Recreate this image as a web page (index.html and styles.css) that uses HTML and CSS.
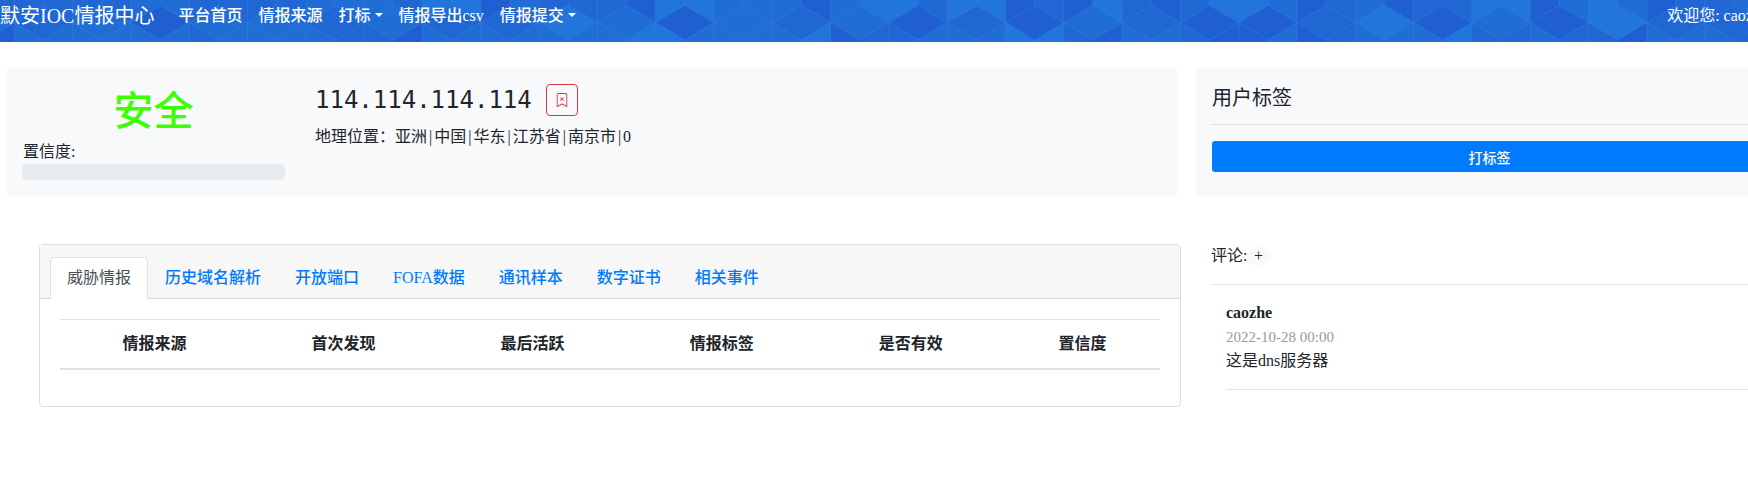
FILE: index.html
```
<!DOCTYPE html>
<html lang="zh-CN">
<head>
<meta charset="utf-8">
<title>默安IOC情报中心</title>
<link rel="stylesheet" href="styles.css">
</head>
<body>
<div class="page">
  <header class="navbar">
    <svg class="navbar-pattern" aria-hidden="true"></svg>
    <a class="brand" href="#">默安IOC情报中心</a>
    <nav class="nav">
      <a href="#">平台首页</a>
      <a href="#">情报来源</a>
      <a class="dropdown" href="#">打标</a>
      <a href="#">情报导出csv</a>
      <a class="dropdown" href="#">情报提交</a>
    </nav>
    <span class="welcome">欢迎您: caozhe</span>
  </header>

  <main class="layout">
    <section class="panel summary">
      <div class="verdict">
        <h1 class="verdict-name">安全</h1>
        <div class="confidence" id="confidence">置信度:</div>
        <div class="progress" role="progressbar" aria-labelledby="confidence"></div>
      </div>
      <div class="address">
        <div class="address-line">
          <h2 class="ip">114.114.114.114</h2>
          <button class="mark" type="button" aria-label="标记">
            <svg width="14" height="14" viewBox="0 0 16 16" fill="currentColor"><path fill-rule="evenodd" d="M6.146 5.146a.5.5 0 0 1 .708 0L8 6.293l1.146-1.147a.5.5 0 1 1 .708.708L8.707 7l1.147 1.146a.5.5 0 0 1-.708.708L8 7.707 6.854 8.854a.5.5 0 1 1-.708-.708L7.293 7 6.146 5.854a.5.5 0 0 1 0-.708z"/><path d="M2 2a2 2 0 0 1 2-2h8a2 2 0 0 1 2 2v13.500a.5.5 0 0 1-.777.416L8 13.101l-5.223 2.815A.5.5 0 0 1 2 15.500V2zm2-1a1 1 0 0 0-1 1v12.566l4.723-2.482a.5.5 0 0 1 .554 0L13 14.566V2a1 1 0 0 0-1-1H4z"/></svg>
          </button>
        </div>
        <p class="location">地理位置：亚洲<span class="sep">|</span>中国<span class="sep">|</span>华东<span class="sep">|</span>江苏省<span class="sep">|</span>南京市<span class="sep">|</span>0</p>
      </div>
    </section>

    <section class="panel tags">
      <h2 class="tags-title">用户标签</h2>
      <button class="add-tag" type="button">打标签</button>
    </section>

    <section class="card">
      <nav class="tabs">
        <a class="tab active" href="#">威胁情报</a>
        <a class="tab" href="#">历史域名解析</a>
        <a class="tab" href="#">开放端口</a>
        <a class="tab" href="#">FOFA数据</a>
        <a class="tab" href="#">通讯样本</a>
        <a class="tab" href="#">数字证书</a>
        <a class="tab" href="#">相关事件</a>
      </nav>
      <div class="card-body">
        <table class="intel">
          <thead>
            <tr><th>情报来源</th><th>首次发现</th><th>最后活跃</th><th>情报标签</th><th>是否有效</th><th>置信度</th></tr>
          </thead>
        </table>
      </div>
    </section>

    <section class="comments">
      <div class="comments-head">评论:<button class="add-comment" type="button">+</button></div>
      <article class="comment">
        <strong>caozhe</strong>
        <time datetime="2022-10-28">2022-10-28 00:00</time>
        <p>这是dns服务器</p>
      </article>
    </section>
  </main>
</div>
<script src="pattern.js"></script>
</body>
</html>
```

FILE: styles.css
```
* { box-sizing: border-box; }

body {
  margin: 0;
  overflow-x: hidden;
  background: #fff;
  color: #212529;
  font-family: "Liberation Serif", "Noto Sans CJK SC", serif;
  font-size: 16px;
  line-height: 24px;
}

h1, h2, p { margin: 0; font-weight: 400; }
a { text-decoration: none; }
button { font-family: inherit; cursor: pointer; }

.page { width: calc(100% + 35px); }

.navbar {
  position: relative;
  display: flex;
  align-items: center;
  height: 42px;
  padding: 0 15px 11px 0;
  overflow: hidden;
  background: #216bd6;
  color: #fff;
  white-space: nowrap;
}
.navbar-pattern {
  position: absolute;
  top: 0;
  left: 0;
  width: 100%;
  height: 100%;
}
.brand, .nav, .welcome { position: relative; color: #fff; }
.brand { font-size: 20px; line-height: 30px; }
.nav { display: flex; flex: 1; margin-left: 16px; }
.nav a { padding: 0 8px; color: #fff; font-weight: 500; }
.dropdown::after {
  content: "";
  display: inline-block;
  margin-left: 4px;
  vertical-align: 4px;
  border-top: 4px solid;
  border-right: 4px solid transparent;
  border-left: 4px solid transparent;
}

.layout {
  display: grid;
  grid-template-columns: 1172fr 587fr;
  column-gap: 18px;
  row-gap: 48px;
  padding: 26px 0 0 6px;
}

.panel { min-height: 128px; border-radius: 4px; background: #f8f9fb; }
.summary { display: flex; padding: 16px; }
.verdict { width: 263px; }
.verdict-name {
  padding-top: 4px;
  color: #3cff00;
  font-size: 40px;
  font-weight: 500;
  line-height: 48px;
  text-align: center;
}
.confidence { margin-top: 4px; padding-left: 1px; }
.progress { height: 16px; border-radius: 4px; background: #e9ecef; }
.address { margin-left: 30px; }
.address-line { display: flex; align-items: center; gap: 14px; }
.ip { font: 24px/28px "DejaVu Sans Mono", monospace; }
.mark {
  display: grid;
  place-items: center;
  width: 32px;
  height: 32px;
  padding: 0;
  border: 1px solid #dc3545;
  border-radius: 4px;
  background: transparent;
  color: #dc3545;
}
.location { margin-top: 9px; }
.sep { padding: 0 2px; }

.tags { padding: 16px; }
.tags-title {
  padding: 2px 0 13px;
  border-bottom: 1px solid #dcdee0;
  font-size: 20px;
  line-height: 25px;
}
.add-tag {
  width: 100%;
  height: 31px;
  margin-top: 16px;
  border: 0;
  border-radius: 3px;
  background: #007bff;
  color: #fff;
  font-size: 14px;
  font-weight: 500;
}

.card {
  margin-left: 33px;
  margin-right: -3px;
  border: 1px solid #dcdddf;
  border-radius: 4px;
}
.tabs {
  display: flex;
  padding: 12px 10px 0;
  border-bottom: 1px solid #d8d9db;
  background: #f7f7f7;
}
.tab {
  margin-bottom: -1px;
  padding: 8px 16px;
  border: 1px solid transparent;
  border-bottom-color: transparent;
  color: #007bff;
  font-weight: 500;
}
.tab.active {
  border-color: #dee2e6 #dee2e6 #fff;
  border-radius: 4px 4px 0 0;
  background: #fff;
  color: #495057;
  font-weight: 400;
}
.card-body { padding: 20px 20px 36px; }
.intel { width: 100%; border-collapse: collapse; }
.intel th {
  padding: 12px;
  border-top: 1px solid #dee2e6;
  border-bottom: 2px solid #dee2e6;
  text-align: center;
}

.comments { margin-left: 15px; margin-right: 16px; }
.comments-head {
  display: flex;
  align-items: center;
  padding-bottom: 16px;
  border-bottom: 1px solid #e4e4e5;
}
.add-comment {
  width: 22px;
  height: 18px;
  padding: 0;
  border: 0;
  border-radius: 9px;
  background: #f8f9fa;
  color: #212529;
  font-size: 16px;
  line-height: 18px;
}
.comment {
  display: flex;
  flex-direction: column;
  margin-left: 15px;
  padding: 16px 0;
  border-bottom: 1px solid #e4e4e5;
}
.comment time { color: #999; font-size: 15px; }
```

FILE: pattern.js
```
// Cube pattern of the navbar. Each cell lists five shades:
// upper left, upper right, rhombus, lower left, lower right.
const cells = ("11200 11122 11222 22022 11212 11222 22121 21210 33122 02122 11322 " +
  "10223 33032 22222 20123 23201 31012 33122 01033 03210 10122 " +
  "13010 32002 01101 20322 11023 33211 02021 32310 01122 12121").split(" ");
const shades = ["#205fd2", "#2167d4", "#216dd6", "#2275da"];
const pitch = 58.3;
const start = -43.9;
let shapes = "";
let lines = "";
cells.forEach((cell, i) => {
  const l = start + pitch * i;
  const m = l + pitch / 2;
  const r = l + pitch;
  const polygons = [
    `${l},0 ${m},0 ${m},5.5 ${l},22.5`,
    `${m},0 ${r},0 ${r},22.5 ${m},5.5`,
    `${l},22.5 ${m},5.5 ${r},22.5 ${m},40`,
    `${l},22.5 ${m},40 ${m},42 ${l},42`,
    `${r},22.5 ${m},40 ${m},42 ${r},42`
  ];
  polygons.forEach((points, n) => {
    shapes += `<polygon points="${points}" fill="${shades[cell[n]]}"/>`;
  });
  lines += `M${l} 0V42M${m} 0V5.5L${l} 22.5L${m} 40V42M${m} 5.5L${r} 22.5L${m} 40`;
});
document.querySelector(".navbar-pattern").innerHTML =
  shapes + `<path d="${lines}" fill="none" stroke="#3a8be4" stroke-opacity=".35"/>`;
```
